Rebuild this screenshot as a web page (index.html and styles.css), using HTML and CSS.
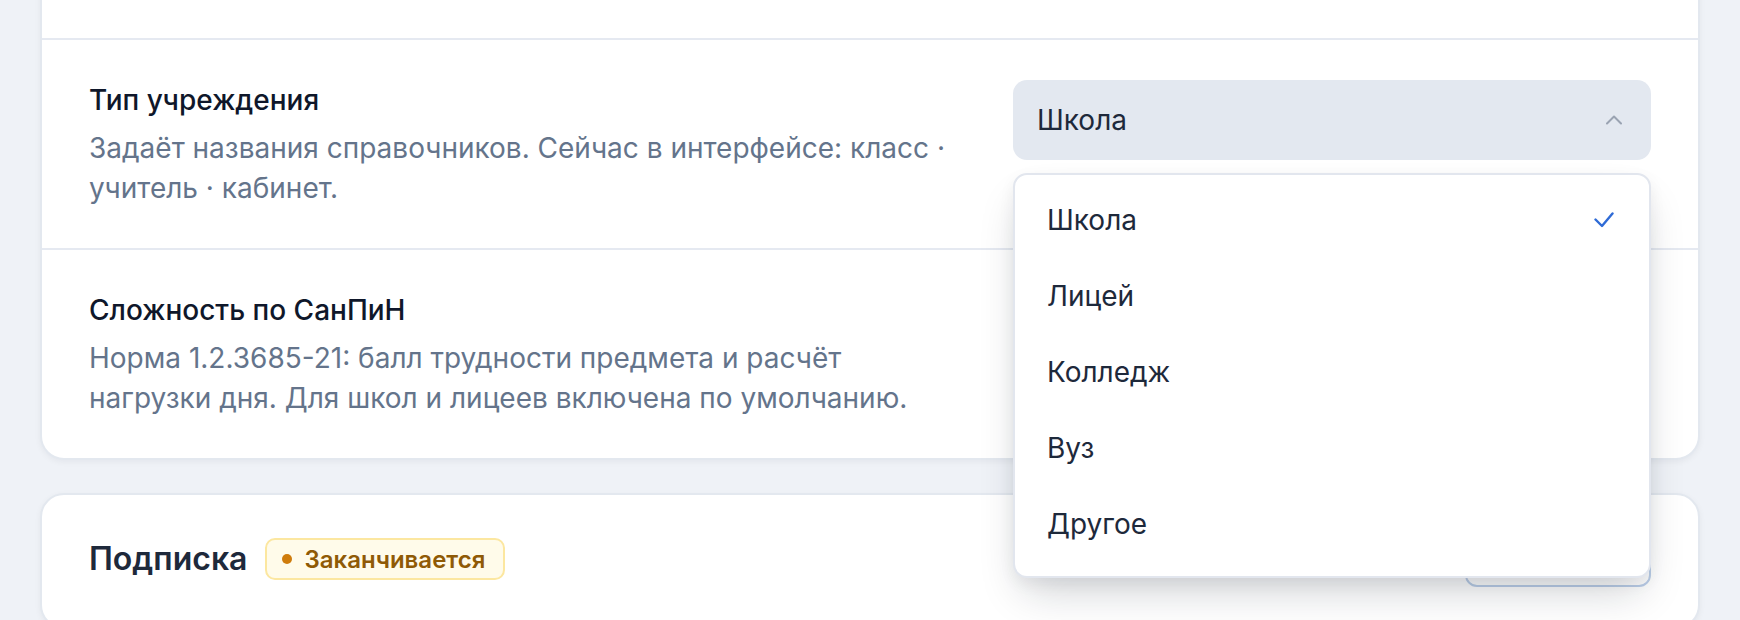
FILE: index.html
```html
<!DOCTYPE html>
<html lang="ru">
<head>
<meta charset="utf-8">
<title>Настройки учреждения</title>
<link rel="stylesheet" href="styles.css">
</head>
<body>
<main class="page">
  <section class="card card--list">
    <div class="row">
      <div class="row-text">
        <div class="row-title">Тип учреждения</div>
        <div class="row-desc">Задаёт названия справочников. Сейчас в интерфейсе: класс · учитель · кабинет.</div>
      </div>
      <div class="control">
        <div class="select is-open">
          <span class="select-value">Школа</span>
          <svg class="chevron" width="16" height="10" viewBox="0 0 16 10" aria-hidden="true">
            <path d="M1 8.5 L8 1.5 L15 8.5" fill="none" stroke="currentColor" stroke-width="2" stroke-linecap="round" stroke-linejoin="round"/>
          </svg>
        </div>
        <ul class="menu" role="listbox">
          <li class="menu-item is-selected" role="option">
            <span>Школа</span>
            <svg class="check" width="20" height="16" viewBox="0 0 20 16" aria-hidden="true">
              <path d="M1.5 7.5 L8 14 L18.5 1.5" fill="none" stroke="currentColor" stroke-width="2.4" stroke-linecap="round" stroke-linejoin="round"/>
            </svg>
          </li>
          <li class="menu-item" role="option"><span>Лицей</span></li>
          <li class="menu-item" role="option"><span>Колледж</span></li>
          <li class="menu-item" role="option"><span>Вуз</span></li>
          <li class="menu-item" role="option"><span>Другое</span></li>
        </ul>
      </div>
    </div>

    <div class="row">
      <div class="row-text">
        <div class="row-title">Сложность по СанПиН</div>
        <div class="row-desc">Норма 1.2.3685-21: балл трудности предмета и расчёт нагрузки дня. Для школ и лицеев включена по умолчанию.</div>
      </div>
      <div class="control">
        <span class="toggle is-on"><span class="toggle-knob"></span></span>
      </div>
    </div>
  </section>

  <section class="card">
    <div class="card-head">
      <div class="head-left">
        <h2 class="card-title">Подписка</h2>
        <span class="badge"><span class="badge-dot"></span>Заканчивается</span>
      </div>
      <button class="btn-outline" type="button">Продлить</button>
    </div>
  </section>
</main>
</body>
</html>
```

FILE: styles.css
```css
* {
  box-sizing: border-box;
}

html,
body {
  margin: 0;
}

body {
  background: #eff2f7;
  font-family: Inter, "Noto Sans", sans-serif;
  color: #0f172a;
}

/* the settings page is scrolled: the top of the first card sits above the viewport */
.page {
  display: flex;
  flex-direction: column;
  gap: 33px;
  margin-top: -40px;
  padding: 0 40px 40px;
}

.card {
  background: #ffffff;
  border: 2px solid #e3e8ef;
  border-radius: 24px;
  box-shadow: 0 2px 6px rgba(15, 23, 42, 0.05);
}

.card--list {
  padding-top: 76px;
}

/* setting rows */
.row {
  display: flex;
  justify-content: space-between;
  align-items: flex-start;
  gap: 48px;
  padding: 40px 47px;
  border-top: 2px solid #e5e9f1;
}

.row-text {
  flex: 1;
  min-width: 0;
  max-width: 872px;
}

.row-title {
  font-size: 28px;
  line-height: 40px;
  font-weight: 500;
  color: #0f172a;
}

.row-desc {
  margin-top: 8px;
  font-size: 28px;
  line-height: 40px;
  color: #64748b;
}

.control {
  position: relative;
  flex-shrink: 0;
  width: 638px;
  display: flex;
  justify-content: flex-end;
}

/* select */
.select {
  width: 100%;
  height: 80px;
  display: flex;
  align-items: center;
  justify-content: space-between;
  padding: 0 29px 0 24px;
  background: #e3e8f0;
  border-radius: 14px;
  font-size: 28px;
  color: #1e293b;
}

.chevron {
  display: block;
  color: #9aa3b2;
}

.menu {
  position: absolute;
  top: calc(100% + 13px);
  left: 0;
  right: 0;
  z-index: 10;
  margin: 0;
  padding: 7px 0 14px;
  list-style: none;
  background: #ffffff;
  border: 2px solid #e2e6ee;
  border-radius: 14px;
  box-shadow: 0 22px 44px -10px rgba(15, 23, 42, 0.2), 0 6px 16px rgba(15, 23, 42, 0.06);
}

.menu-item {
  height: 76px;
  display: flex;
  align-items: center;
  justify-content: space-between;
  padding: 0 35px 0 32px;
  font-size: 28px;
  color: #1e293b;
}

.check {
  display: block;
  color: #2f6bd6;
}

/* toggle */
.toggle {
  display: inline-flex;
  align-items: center;
  width: 88px;
  height: 48px;
  padding: 4px;
  border-radius: 24px;
  background: #2563eb;
}

.toggle.is-on {
  justify-content: flex-end;
}

.toggle-knob {
  width: 40px;
  height: 40px;
  border-radius: 50%;
  background: #ffffff;
}

/* subscription card */
.card-head {
  display: flex;
  align-items: center;
  justify-content: space-between;
  padding: 36px 47px 40px;
}

.head-left {
  display: flex;
  align-items: center;
  gap: 18px;
}

.card-title {
  margin: 0;
  font-size: 32px;
  line-height: 40px;
  font-weight: 600;
  color: #1e293b;
}

.badge {
  display: inline-flex;
  align-items: center;
  gap: 12px;
  height: 42px;
  padding: 0 18px 0 15px;
  background: #fffbea;
  border: 2px solid #fce7a0;
  border-radius: 10px;
  font-size: 24px;
  font-weight: 600;
  color: #8f5a06;
}

.badge-dot {
  width: 10px;
  height: 10px;
  border-radius: 50%;
  background: #cf7c0c;
}

.btn-outline {
  width: 186px;
  height: 56px;
  border: 2px solid #bccfe9;
  border-radius: 12px;
  background: #ffffff;
  font-family: inherit;
  font-size: 26px;
  font-weight: 500;
  color: #2563eb;
}
```
